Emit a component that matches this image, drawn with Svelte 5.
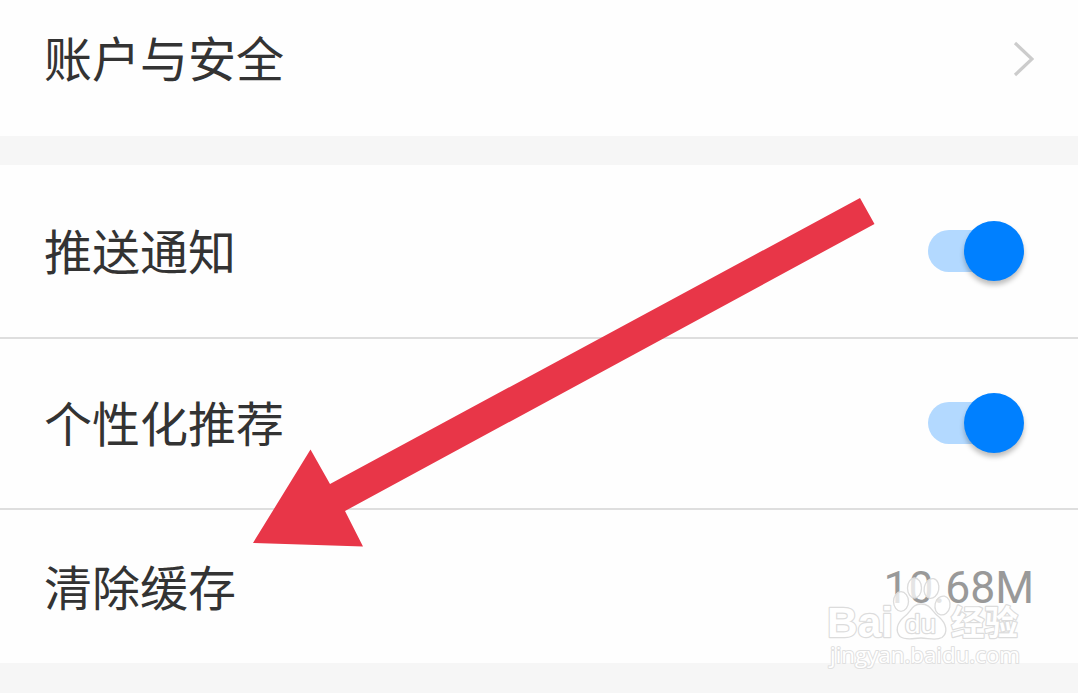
<script lang="ts">
  type Row = {
    label: string;
    kind: 'link' | 'switch' | 'value';
    value?: string;
  };

  let groups = $state<{ name: string; rows: Row[] }[]>([
    { name: 'account', rows: [{ label: '账户与安全', kind: 'link' }] },
    {
      name: 'general',
      rows: [
        { label: '推送通知', kind: 'switch' },
        { label: '个性化推荐', kind: 'switch' },
        { label: '清除缓存', kind: 'value', value: '10.68M' }
      ]
    }
  ]);

  let enabled = $state<Record<string, boolean>>({
    推送通知: true,
    个性化推荐: true
  });

  function toggle(label: string) {
    enabled[label] = !enabled[label];
  }
</script>

<main class="settings">
  {#each groups as group (group.name)}
    <section class="group">
      {#each group.rows as row (row.label)}
        <div class="row {row.kind}">
          <span class="label">{row.label}</span>
          {#if row.kind === 'link'}
            <svg class="chevron" width="22" height="38" viewBox="0 0 22 38" fill="none" stroke="currentColor" stroke-width="3.2">
              <path d="M3 3 L20 19 L3 35" />
            </svg>
          {:else if row.kind === 'switch'}
            <button
              class="switch"
              class:on={enabled[row.label]}
              onclick={() => toggle(row.label)}
              role="switch"
              aria-checked={enabled[row.label]}
              aria-label={row.label}
              type="button"
            >
              <span class="thumb"></span>
            </button>
          {:else}
            <span class="value">{row.value}</span>
          {/if}
        </div>
      {/each}
    </section>
  {/each}

  <!-- 指示箭头 -->
  <svg class="arrow" viewBox="0 0 1078 693" aria-hidden="true">
    <polygon points="860,198 874.5,224 345,511 363,546.5 253,543 310.5,449.5 330,484" />
  </svg>

  <!-- 水印 -->
  <svg class="watermark" width="210" height="110" viewBox="820 570 210 110" aria-hidden="true">
    <g class="paw">
      <ellipse cx="901" cy="601.5" rx="7.5" ry="9.8" />
      <ellipse cx="914.5" cy="588" rx="7" ry="10" />
      <ellipse cx="931.5" cy="588.5" rx="7.3" ry="10" transform="rotate(12 931.5 588.5)" />
      <ellipse cx="942.5" cy="605.5" rx="7.5" ry="9.5" transform="rotate(12 942.5 605.5)" />
      <path d="M921 604 C931 604 932 612 939 617 C947 624 948 633 942 637.5 C936 641 928 638 921 638 C914 638 906 641 900 636.5 C895 631 897 623 904 617 C911 612 912 604 921 604 Z" />
    </g>
    <text class="logo" x="827" y="637" textLength="66" lengthAdjust="spacingAndGlyphs">Bai</text>
    <text class="du" x="905" y="633" textLength="31" lengthAdjust="spacingAndGlyphs">du</text>
    <text class="cjk" x="951" y="635" textLength="67" lengthAdjust="spacingAndGlyphs">经验</text>
    <text class="site" x="830" y="663" textLength="190" lengthAdjust="spacingAndGlyphs">jingyan.baidu.com</text>
  </svg>
</main>

<style>
  :global(body) {
    overflow: hidden;
    background-color: #f6f6f6;
  }

  .settings {
    position: relative;
    height: 693px;
    display: flex;
    flex-direction: column;
    gap: 29px;
    overflow: hidden;
    background-color: #f6f6f6;
    color: #333;
    font-family: 'Noto Sans CJK SC', sans-serif;
  }

  .group {
    background-color: #fefefe;
  }

  .row {
    box-sizing: border-box;
    display: flex;
    align-items: center;
    justify-content: space-between;
    padding: 0 44px;
  }

  .row.link {
    height: 136px;
    padding-bottom: 18px;
  }

  .row.switch {
    height: 171px;
    padding-bottom: 2px;
    border-bottom: 2px solid #dedede;
  }

  .row.switch:first-child {
    height: 174px;
    padding-bottom: 0;
  }

  .row.value {
    height: 153px;
  }

  .label {
    padding-bottom: 4px;
    font-size: 48px;
    line-height: 70px;
    white-space: nowrap;
  }

  .row.link .label {
    padding-bottom: 6px;
  }

  .chevron {
    color: #ccc;
  }

  button.switch {
    width: 86px;
    height: 42px;
    margin-right: 20px;
    padding: 0;
    display: flex;
    align-items: center;
    border: none;
    border-radius: 21px;
    background-color: #d5d5d5;
    cursor: pointer;
  }

  button.switch.on {
    justify-content: flex-end;
    background-color: #b3d9ff;
  }

  .thumb {
    flex: none;
    width: 60px;
    height: 60px;
    margin-right: -10px;
    border-radius: 50%;
    background-color: #fff;
    box-shadow: 0 4px 5px rgba(0, 0, 0, 0.25);
  }

  .on .thumb {
    background-color: #0080ff;
  }

  span.value {
    padding-top: 2px;
    color: #999;
    font-family: Roboto, sans-serif;
    font-size: 44.5px;
  }

  .arrow {
    position: absolute;
    top: 0;
    left: 0;
    width: 1078px;
    height: 693px;
    fill: #e83648;
    pointer-events: none;
  }

  .watermark {
    position: absolute;
    left: 820px;
    top: 570px;
    fill: #fff;
    fill-opacity: 0.75;
    stroke: #dcdcdc;
    stroke-width: 1.3px;
    stroke-linejoin: round;
    pointer-events: none;
  }

  .watermark text {
    stroke-width: 2.4px;
    paint-order: stroke;
    fill-opacity: 1;
  }

  .logo {
    font: bold 43px 'Liberation Sans', sans-serif;
  }

  .du {
    font: 26px 'Liberation Sans', sans-serif;
  }

  .cjk {
    font: bold 34px 'Noto Sans CJK SC', sans-serif;
  }

  .watermark .site {
    font: 22px 'Open Sans', sans-serif;
    stroke: #e0e0e0;
    stroke-width: 2px;
  }
</style>
